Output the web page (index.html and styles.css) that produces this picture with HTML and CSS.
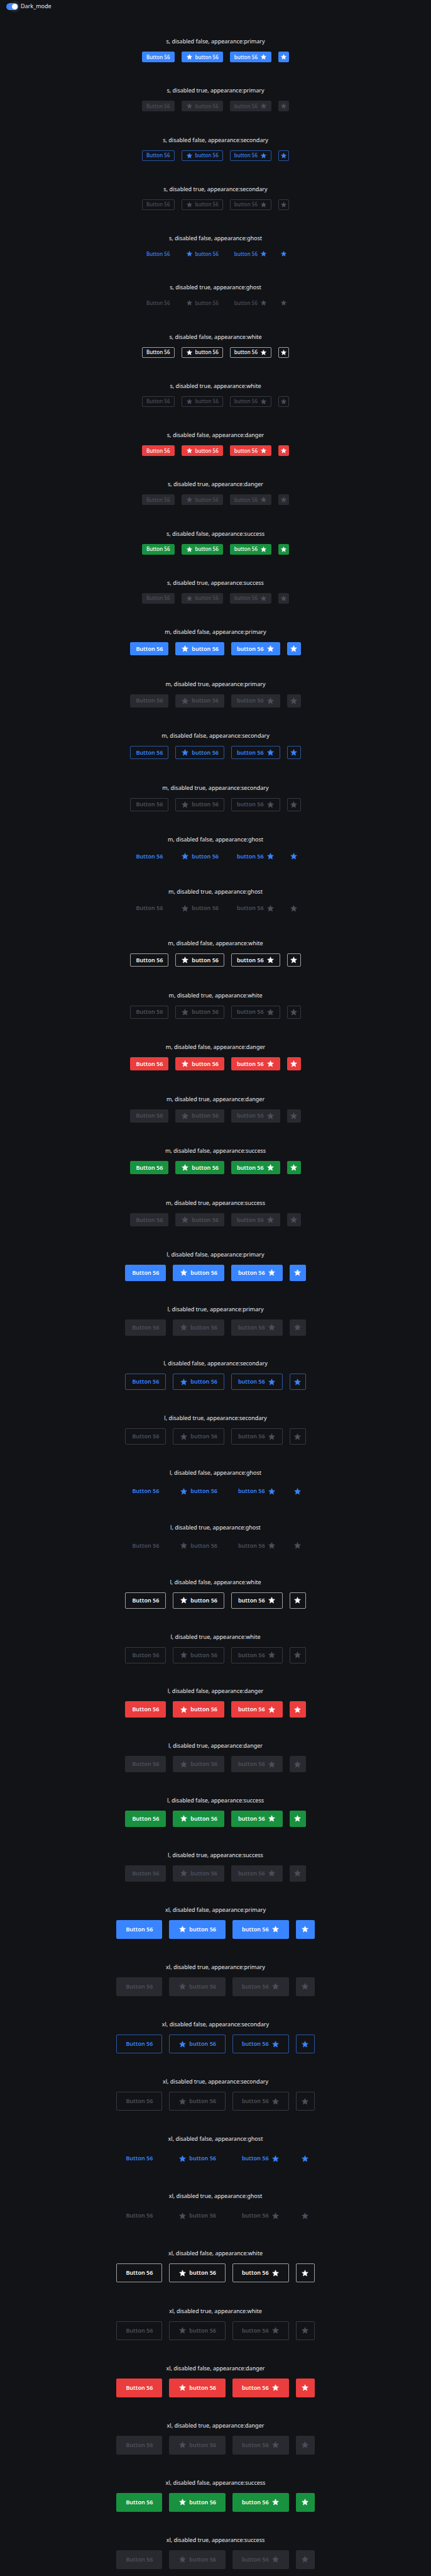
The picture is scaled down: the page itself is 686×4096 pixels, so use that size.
FILE: index.html
```html
<!DOCTYPE html>
<html lang="en">
<head>
<meta charset="utf-8">
<title>Buttons</title>
<link rel="stylesheet" href="styles.css">
</head>
<body>
<svg class="sprite" aria-hidden="true">
  <symbol id="star" viewBox="0 0 24 24">
    <path d="M12 3 14.500 9 21 9.600 16.100 13.900 17.600 20.300 12 16.900 6.400 20.300 7.900 13.900 3 9.600 9.500 9Z" stroke="currentColor" stroke-width="1.200" stroke-linejoin="round"/>
  </symbol>
</svg>
<header class="toolbar">
  <label class="switch">
    <input class="switch-input" type="checkbox" role="switch" checked>
    <span class="switch-text">Dark_mode</span>
  </label>
</header>
<main class="gallery" id="gallery"></main>
<script src="gallery.js"></script>
</body>
</html>
```
FILE: styles.css
```css
* {
  box-sizing: border-box;
}

html {
  height: 100%;
  background: #121317;
}

body {
  margin: 0;
  height: 100%;
  display: flex;
  flex-direction: column;
  color: #ececee;
  font-family: "Noto Sans", sans-serif;
  font-size: 9px;
  line-height: 12px;
}

.sprite {
  display: none;
}

/* Toolbar */

.toolbar {
  flex: none;
  height: 32px;
  padding: 4px 10px;
}

.switch {
  display: inline-flex;
  align-items: center;
  gap: 4px;
}

.switch-input {
  appearance: none;
  display: flex;
  align-items: center;
  justify-content: flex-end;
  width: 19px;
  height: 11px;
  margin: 0;
  padding: 1px;
  border-radius: 6px;
  background: #3985ff;
}

.switch-input::before {
  content: "";
  width: 9px;
  height: 9px;
  border-radius: 50%;
  background: #fff;
  box-shadow: 0 0 0 5px rgba(255, 255, 255, 0.06);
}

.switch-input:not(:checked) {
  justify-content: flex-start;
  background: #50535e;
}

/* Gallery */

.gallery {
  flex: 1 0 0;
  display: flex;
  flex-direction: column;
}

.sample {
  display: flex;
  flex-direction: column;
  justify-content: flex-end;
  align-items: center;
  gap: 10px;
}

.sample::after {
  content: "";
  height: 1px;
}

.sample-s { flex: 146 0 0; }
.sample-m { flex: 154 0 0; }
.sample-l { flex: 162 0 0; }
.sample-xl { flex: 170 0 0; }

.sample-title {
  margin: 0;
  font-size: 9px;
  font-weight: 400;
  line-height: 12px;
}

.sample-row {
  display: flex;
  gap: 11px;
}

/* Buttons */

.btn {
  display: inline-flex;
  align-items: center;
  justify-content: center;
  gap: 4px;
  margin: 0;
  border: 1px solid transparent;
  border-radius: 2px;
  background: transparent;
  font-family: inherit;
  font-weight: 600;
  font-size: 9px;
  line-height: 12px;
}

.btn-icon {
  width: 13px;
  height: 13px;
  fill: currentColor;
}

.btn-s {
  height: 17px;
  padding: 0 6px;
  font-size: 8px;
  font-weight: 500;
}

.btn-s .btn-icon {
  width: 11px;
  height: 11px;
}

.btn-m { height: 21px; padding: 0 8px; }
.btn-l { height: 26px; padding: 0 10px; }
.btn-xl { height: 30px; padding: 0 14px; }

.btn.btn-square { padding: 0; }
.btn-s.btn-square { width: 17px; }
.btn-m.btn-square { width: 22px; }
.btn-l.btn-square { width: 26px; }
.btn-xl.btn-square { width: 30px; }

.btn-primary,
.btn-danger,
.btn-success {
  color: #fff;
}

.btn-primary {
  border-color: #3985ff;
  background: #3985ff;
}

.btn-danger {
  border-color: #eb3d3d;
  background: #eb3d3d;
}

.btn-success {
  border-color: #18923f;
  background: #18923f;
}

.btn-secondary {
  border-color: rgba(57, 133, 255, 0.6);
  color: #3985ff;
}

.btn-ghost { color: #3985ff; }

.btn-white {
  border-color: rgba(255, 255, 255, 0.6);
  color: #fff;
}

.btn:disabled { color: #4c505b; }

.btn-primary:disabled,
.btn-danger:disabled,
.btn-success:disabled {
  border-color: #292a2f;
  background: #292a2f;
}

.btn-secondary:disabled,
.btn-white:disabled {
  border-color: rgba(80, 83, 94, 0.6);
}
```
FILE: gallery.js
```js
const sizes = ['s', 'm', 'l', 'xl'];
const appearances = ['primary', 'secondary', 'ghost', 'white', 'danger', 'success'];

const star = '<svg class="btn-icon" aria-hidden="true"><use href="#star"/></svg>';

function button(size, appearance, disabled, content) {
  return `<button type="button" class="btn btn-${size} btn-${appearance}"${disabled ? ' disabled' : ''}>${content}</button>`;
}

function iconButton(size, appearance, disabled) {
  return `<button type="button" class="btn btn-${size} btn-${appearance} btn-square" aria-label="Star"${disabled ? ' disabled' : ''}>${star}</button>`;
}

function sample(size, appearance, disabled) {
  const make = (content) => button(size, appearance, disabled, content);
  return `<section class="sample sample-${size}">
    <h2 class="sample-title">${size}, disabled ${disabled}, appearance:${appearance}</h2>
    <div class="sample-row">
      ${make('<span>Button 56</span>')}
      ${make(star + '<span>button 56</span>')}
      ${make('<span>button 56</span>' + star)}
      ${iconButton(size, appearance, disabled)}
    </div>
  </section>`;
}

document.getElementById('gallery').innerHTML = sizes
  .flatMap((size) => appearances.flatMap((appearance) =>
    [false, true].map((disabled) => sample(size, appearance, disabled))))
  .join('');
```
